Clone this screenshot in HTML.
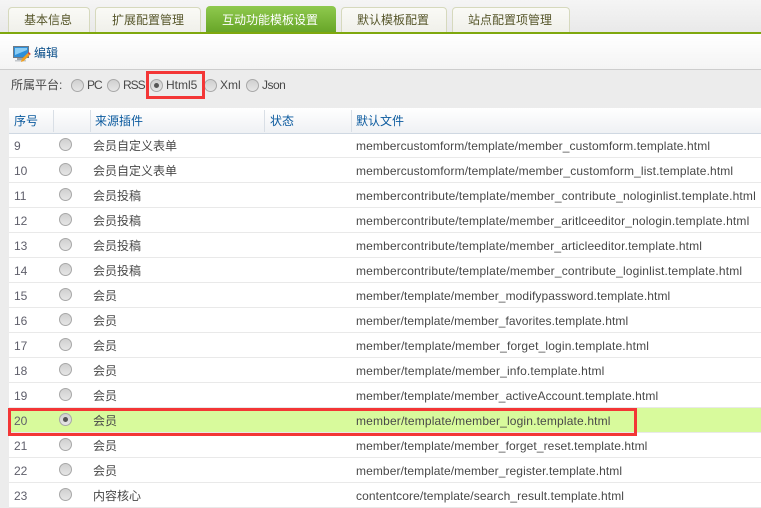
<!DOCTYPE html>
<html><head><meta charset="utf-8"><style>
html,body{margin:0;padding:0;width:761px;height:499px;overflow:hidden;background:#ececec;font:12px/16px "Liberation Sans","WenQuanYi Zen Hei","Noto Sans CJK SC",sans-serif;color:#484848}
.a{position:absolute;white-space:nowrap}
.tab{position:absolute;top:7px;height:25px;box-sizing:border-box;border:1px solid #d6d9bd;border-bottom:0;border-radius:4px 4px 0 0;background:linear-gradient(#fafaf6,#f0f0ea);color:#56562a;text-align:center;line-height:25px;font-size:12px}
.tab.on{top:6px;height:26px;border:0;background:linear-gradient(#8fc94e,#68a628);color:#fff;line-height:28px}
.r{position:absolute;width:13px;height:13px;border-radius:50%;box-sizing:border-box;border:1px solid #a8a8a8;background:linear-gradient(#d0d0d0,#e6e6e6)}
.r.c::after{content:"";position:absolute;left:3px;top:3px;width:5px;height:5px;border-radius:50%;background:#555}
.row{position:absolute;left:9px;right:0;height:24px;border-bottom:1px solid #e9e9e9;background:#fff}
.row span{position:absolute;top:5px;white-space:nowrap}
.row .n{left:5px;color:#5f5f6b}.row .p{left:84px}.row .f{left:347px;letter-spacing:.155px}
.row .r{left:49.5px;top:4.5px}
.h{position:absolute;top:108px;height:26px;color:#0b5a9e;line-height:27px}
.s{position:absolute;top:110px;width:1px;height:22px;background:#d9dfe6}
</style></head><body>
<div class="a" style="left:0;top:0;width:761px;height:32px;background:linear-gradient(#f5f5f5,#e9e9e9)"></div>
<div class="tab" style="left:8px;width:82px;text-indent:-2px">基本信息</div>
<div class="tab" style="left:95px;width:106px">扩展配置管理</div>
<div class="tab on" style="left:206px;width:130px;text-indent:-2px">互动功能模板设置</div>
<div class="tab" style="left:341px;width:106px;text-indent:-2px">默认模板配置</div>
<div class="tab" style="left:452px;width:118px;text-indent:-2px">站点配置项管理</div>
<div class="a" style="left:0;top:32px;width:761px;height:2px;background:#7fa80e"></div>
<div class="a" style="left:0;top:34px;width:761px;height:35px;background:linear-gradient(#fff,#f4f4f4)"></div>
<div class="a" style="left:0;top:69px;width:761px;height:1px;background:#cdcdcd"></div>
<svg class="a" style="left:13px;top:46px" width="19" height="17" viewBox="0 0 19 17"><rect x=".5" y=".5" width="15" height="11" fill="#2f8fd8" stroke="#6f7a85"/><path d="M2 2h12v2L2 9z" fill="#8accf4"/><rect x="4" y="12" width="7" height="2" fill="#9aa3ab"/><rect x="2" y="14" width="11" height="1.500" fill="#c4c8cc"/><path d="M8 16l.8-3 6-6 2 2-6 6z" fill="#f0a020"/><path d="M14.800 7l1-1 2 2-1 1z" fill="#e03a3a"/></svg>
<div class="a" style="left:34px;top:45px;color:#0b4f8a">编辑</div>
<div class="a" style="left:11px;top:77px">所属平台:</div>
<div class="r" style="left:71px;top:79px"></div><div class="a" style="left:87px;top:77px;letter-spacing:-1px">PC</div>
<div class="r" style="left:107px;top:79px"></div><div class="a" style="left:123px;top:77px;letter-spacing:-1px">RSS</div>
<div class="r c" style="left:150px;top:79px"></div><div class="a" style="left:166px;top:77px">Html5</div>
<div class="r" style="left:204px;top:79px"></div><div class="a" style="left:220px;top:77px">Xml</div>
<div class="r" style="left:246px;top:79px"></div><div class="a" style="left:262px;top:77px;letter-spacing:-.5px">Json</div>
<div class="a" style="left:9px;top:108px;width:752px;height:25px;background:linear-gradient(#fff,#eff1f4);border-bottom:1px solid #cfd8e2"></div>
<div class="h" style="left:14px">序号</div><div class="h" style="left:95px">来源插件</div><div class="h" style="left:270px">状态</div><div class="h" style="left:356px">默认文件</div>
<div class="s" style="left:53px"></div><div class="s" style="left:90px"></div><div class="s" style="left:264px"></div><div class="s" style="left:351px"></div>
<div class="row" style="top:134px;height:23px"><span class="n" style="top:4px">9</span><i class="r" style="top:3.5px"></i><span class="p" style="top:4px">会员自定义表单</span><span class="f" style="top:4px;letter-spacing:.105px">membercustomform/template/member_customform.template.html</span></div>
<div class="row" style="top:158px"><span class="n">10</span><i class="r"></i><span class="p">会员自定义表单</span><span class="f" style="letter-spacing:.125px">membercustomform/template/member_customform_list.template.html</span></div>
<div class="row" style="top:183px"><span class="n">11</span><i class="r"></i><span class="p">会员投稿</span><span class="f" style="letter-spacing:.17px">membercontribute/template/member_contribute_nologinlist.template.html</span></div>
<div class="row" style="top:208px"><span class="n">12</span><i class="r"></i><span class="p">会员投稿</span><span class="f">membercontribute/template/member_aritlceeditor_nologin.template.html</span></div>
<div class="row" style="top:233px"><span class="n">13</span><i class="r"></i><span class="p">会员投稿</span><span class="f">membercontribute/template/member_articleeditor.template.html</span></div>
<div class="row" style="top:258px"><span class="n">14</span><i class="r"></i><span class="p">会员投稿</span><span class="f" style="letter-spacing:.17px">membercontribute/template/member_contribute_loginlist.template.html</span></div>
<div class="row" style="top:283px"><span class="n">15</span><i class="r"></i><span class="p">会员</span><span class="f" style="letter-spacing:.095px">member/template/member_modifypassword.template.html</span></div>
<div class="row" style="top:308px"><span class="n">16</span><i class="r"></i><span class="p">会员</span><span class="f" style="letter-spacing:.09px">member/template/member_favorites.template.html</span></div>
<div class="row" style="top:333px"><span class="n">17</span><i class="r"></i><span class="p">会员</span><span class="f">member/template/member_forget_login.template.html</span></div>
<div class="row" style="top:358px"><span class="n">18</span><i class="r"></i><span class="p">会员</span><span class="f">member/template/member_info.template.html</span></div>
<div class="row" style="top:383px"><span class="n">19</span><i class="r"></i><span class="p">会员</span><span class="f" style="letter-spacing:.095px">member/template/member_activeAccount.template.html</span></div>
<div class="row" style="top:408px;background:#d8fa9c"><span class="n">20</span><i class="r c"></i><span class="p">会员</span><span class="f">member/template/member_login.template.html</span></div>
<div class="row" style="top:433px"><span class="n">21</span><i class="r"></i><span class="p">会员</span><span class="f" style="letter-spacing:.095px">member/template/member_forget_reset.template.html</span></div>
<div class="row" style="top:458px"><span class="n">22</span><i class="r"></i><span class="p">会员</span><span class="f" style="letter-spacing:.09px">member/template/member_register.template.html</span></div>
<div class="row" style="top:483px"><span class="n">23</span><i class="r"></i><span class="p">内容核心</span><span class="f" style="letter-spacing:.11px">contentcore/template/search_result.template.html</span></div>
<div class="a" style="left:146px;top:71px;width:59px;height:28px;box-sizing:border-box;border:3px solid #f33636"></div>
<div class="a" style="left:8px;top:408px;width:629px;height:28px;box-sizing:border-box;border:3px solid #f33636"></div>
</body></html>
